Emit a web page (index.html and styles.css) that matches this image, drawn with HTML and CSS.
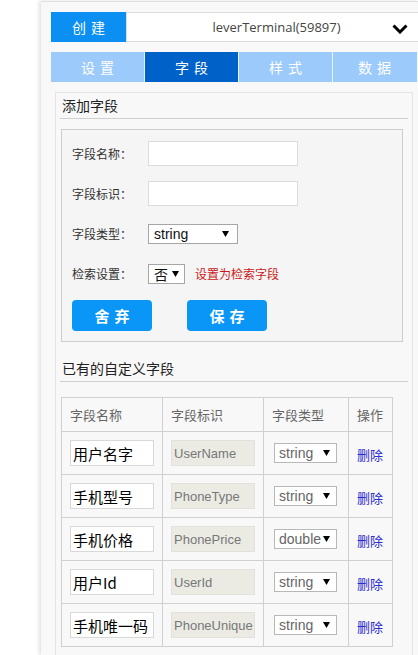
FILE: index.html
```html
<!DOCTYPE html>
<html lang="zh-CN">
<head>
<meta charset="utf-8">
<title>字段</title>
<link rel="stylesheet" href="styles.css">
</head>
<body>
<div class="shell">
  <div class="topbar">
    <div class="create">创建</div>
    <div class="proj">
      <span class="proj-name">leverTerminal(59897)</span>
      <svg class="chev" width="16" height="10" viewBox="0 0 16 10"><polyline points="1.5,1.5 8,8 14.5,1.5" fill="none" stroke="#000" stroke-width="3"/></svg>
    </div>
  </div>
  <div class="tabs">
    <div class="tab">设置</div>
    <div class="tab active">字段</div>
    <div class="tab">样式</div>
    <div class="tab last">数据</div>
  </div>
  <div class="panel">
    <div class="heading">添加字段</div>
    <div class="formbox">
      <div class="row">
        <label class="lbl">字段名称：</label>
        <span class="inp"></span>
      </div>
      <div class="row">
        <label class="lbl">字段标识：</label>
        <span class="inp"></span>
      </div>
      <div class="row">
        <label class="lbl">字段类型：</label>
        <span class="sel sel-type"><span class="sel-val">string</span><svg class="tri" width="7" height="6" viewBox="0 0 7 6"><polygon points="0,0 7,0 3.5,6" fill="#000"/></svg></span>
      </div>
      <div class="row">
        <label class="lbl">检索设置：</label>
        <span class="sel sel-yn"><span class="sel-val">否</span><svg class="tri" width="7" height="6" viewBox="0 0 7 6"><polygon points="0,0 7,0 3.5,6" fill="#000"/></svg></span>
        <span class="hint">设置为检索字段</span>
      </div>
      <div class="btns">
        <button class="btn">舍弃</button>
        <button class="btn">保存</button>
      </div>
    </div>
    <div class="heading heading2">已有的自定义字段</div>
    <table class="grid">
      <colgroup><col class="c1"><col class="c2"><col class="c3"><col class="c4"></colgroup>
      <thead>
        <tr><th>字段名称</th><th>字段标识</th><th>字段类型</th><th>操作</th></tr>
      </thead>
      <tbody>
        <tr>
          <td><span class="tin">用户名字</span></td>
          <td><span class="tid">UserName</span></td>
          <td><span class="tsel"><span class="sel-val">string</span><svg class="tri" width="7" height="6" viewBox="0 0 7 6"><polygon points="0,0 7,0 3.5,6" fill="#000"/></svg></span></td>
          <td><a class="del">删除</a></td>
        </tr>
        <tr>
          <td><span class="tin">手机型号</span></td>
          <td><span class="tid">PhoneType</span></td>
          <td><span class="tsel"><span class="sel-val">string</span><svg class="tri" width="7" height="6" viewBox="0 0 7 6"><polygon points="0,0 7,0 3.5,6" fill="#000"/></svg></span></td>
          <td><a class="del">删除</a></td>
        </tr>
        <tr>
          <td><span class="tin">手机价格</span></td>
          <td><span class="tid">PhonePrice</span></td>
          <td><span class="tsel"><span class="sel-val">double</span><svg class="tri" width="7" height="6" viewBox="0 0 7 6"><polygon points="0,0 7,0 3.5,6" fill="#000"/></svg></span></td>
          <td><a class="del">删除</a></td>
        </tr>
        <tr>
          <td><span class="tin">用户Id</span></td>
          <td><span class="tid">UserId</span></td>
          <td><span class="tsel"><span class="sel-val">string</span><svg class="tri" width="7" height="6" viewBox="0 0 7 6"><polygon points="0,0 7,0 3.5,6" fill="#000"/></svg></span></td>
          <td><a class="del">删除</a></td>
        </tr>
        <tr>
          <td><span class="tin">手机唯一码</span></td>
          <td><span class="tid">PhoneUnique</span></td>
          <td><span class="tsel"><span class="sel-val">string</span><svg class="tri" width="7" height="6" viewBox="0 0 7 6"><polygon points="0,0 7,0 3.5,6" fill="#000"/></svg></span></td>
          <td><a class="del">删除</a></td>
        </tr>
      </tbody>
    </table>
  </div>
</div>
</body>
</html>
```

FILE: styles.css
```css
html, body {
  margin: 0;
  padding: 0;
  background: #fff;
  width: 418px;
  height: 655px;
  overflow: hidden;
}
body {
  font-family: "Noto Sans CJK SC", "Noto Sans", sans-serif;
  color: #333;
}
.shell {
  margin-left: 41px;
  margin-top: 1px;
  width: 377px;
  height: 653px;
  overflow: hidden;
  background: #f8f8f8;
  border-top: 1px solid #e0e0e0;
  box-shadow: -2px 0 4px rgba(0, 0, 0, 0.12);
}
.topbar {
  display: flex;
  height: 30px;
  margin: 10px 0 0 10px;
}
.create {
  width: 75px;
  flex: none;
  background: #0b8ff3;
  color: #fff;
  font-size: 14px;
  letter-spacing: 5px;
  text-indent: 5px;
  display: flex;
  align-items: center;
  justify-content: center;
}
.proj {
  flex: none;
  width: 292px;
  box-sizing: border-box;
  background: #fff;
  border: 1px solid #dcdcdc;
  border-right: none;
  display: flex;
  align-items: center;
  padding-left: 46px;
}
.proj-name {
  flex: 1;
  text-align: center;
  font-family: "Open Sans", "Noto Sans", sans-serif;
  font-size: 13px;
  color: #444;
}
.chev {
  margin: 3px 10px 0 12px;
  flex: none;
}
.tabs {
  display: flex;
  margin: 10px 0 0 10px;
  height: 30px;
}
.tab {
  flex: none;
  width: 93px;
  background: #9ccbfb;
  color: #fff;
  font-size: 14px;
  letter-spacing: 5px;
  text-indent: 5px;
  display: flex;
  align-items: center;
  justify-content: center;
}
.tab.last {
  width: 85px;
  justify-content: flex-start;
  padding-left: 20px;
  box-sizing: border-box;
}
.tab + .tab {
  border-left: 1px solid #e8f2fd;
}
.tab.active {
  background: #0062c8;
}
.panel {
  margin: 10px 0 0 14px;
  width: 358px;
  height: 570px;
  box-sizing: border-box;
  border: 1px solid #e4e4e4;
  border-bottom: none;
  padding: 1px 4px 0;
}
.heading {
  margin: 0;
  padding: 0 2px 2px;
  line-height: 22px;
  font-size: 14px;
  color: #222;
  border-bottom: 1px solid #cfcfcf;
}
.heading2 {
  margin-top: 15px;
}
.formbox {
  margin: 10px 5px 0 1px;
  width: 342px;
  box-sizing: border-box;
  border: 1px solid #cdcdcd;
  background: #f5f5f5;
  padding: 11px 10px 10px;
}
.row {
  display: flex;
  align-items: center;
  height: 25px;
  margin-bottom: 15px;
}
.lbl {
  width: 76px;
  flex: none;
  font-size: 12px;
  color: #333;
}
.inp {
  width: 150px;
  height: 25px;
  box-sizing: border-box;
  background: #fff;
  border: 1px solid #dcdcdc;
}
.sel {
  height: 20px;
  box-sizing: border-box;
  background: #fff;
  border: 1px solid #a6a6a6;
  display: flex;
  align-items: center;
  padding: 0 8px 0 5px;
  font-family: "Liberation Sans", "Noto Sans CJK SC", sans-serif;
  font-size: 14px;
  color: #111;
}
.sel-val {
  flex: 1;
}
.sel-type {
  width: 90px;
}
.sel-yn {
  width: 37px;
  padding-right: 5px;
  font-family: "Noto Sans CJK SC", sans-serif;
}
.tri {
  flex: none;
}
.hint {
  margin-left: 10px;
  font-size: 12px;
  color: #cc1818;
}
.btns {
  display: flex;
  gap: 35px;
  margin-top: -1px;
}
.btn {
  width: 80px;
  height: 31px;
  border: none;
  border-radius: 4px;
  background: #0a96f6;
  color: #fff;
  font-family: "Noto Sans CJK SC", sans-serif;
  font-size: 15px;
  font-weight: bold;
  letter-spacing: 5px;
  text-indent: 5px;
  padding: 0;
}
.grid {
  margin: 15px 0 0 1px;
  border-collapse: collapse;
  table-layout: fixed;
  width: 331px;
}
.c1 { width: 101px; }
.c2 { width: 101px; }
.c3 { width: 85px; }
.c4 { width: 44px; }
.grid th, .grid td {
  border: 1px solid #d0d0d0;
  padding: 0 0 0 8px;
  text-align: left;
  vertical-align: middle;
}
.grid th {
  height: 33px;
  font-weight: normal;
  font-size: 13px;
  color: #666;
}
.grid td {
  height: 42px;
}
.grid td:nth-child(3) {
  padding-left: 10px;
}
.tin {
  display: flex;
  align-items: center;
  width: 84px;
  height: 26px;
  box-sizing: border-box;
  background: #fff;
  border: 1px solid #d8d8d8;
  padding-left: 2px;
  font-size: 15px;
  color: #000;
  overflow: hidden;
  white-space: nowrap;
}
.tid {
  display: flex;
  align-items: center;
  width: 84px;
  height: 26px;
  box-sizing: border-box;
  background: #ebebe4;
  border: 1px solid #e2e2dc;
  padding-left: 2px;
  font-family: "Liberation Sans", sans-serif;
  font-size: 13px;
  color: #777;
  overflow: hidden;
  white-space: nowrap;
}
.tsel {
  display: flex;
  align-items: center;
  width: 63px;
  height: 20px;
  box-sizing: border-box;
  background: #fff;
  border: 1px solid #b8b8b8;
  padding: 0 6px 0 4px;
  font-family: "Liberation Sans", sans-serif;
  font-size: 14px;
  color: #666;
}
.del {
  font-size: 13px;
  color: #2a2ad0;
  cursor: pointer;
}
```
